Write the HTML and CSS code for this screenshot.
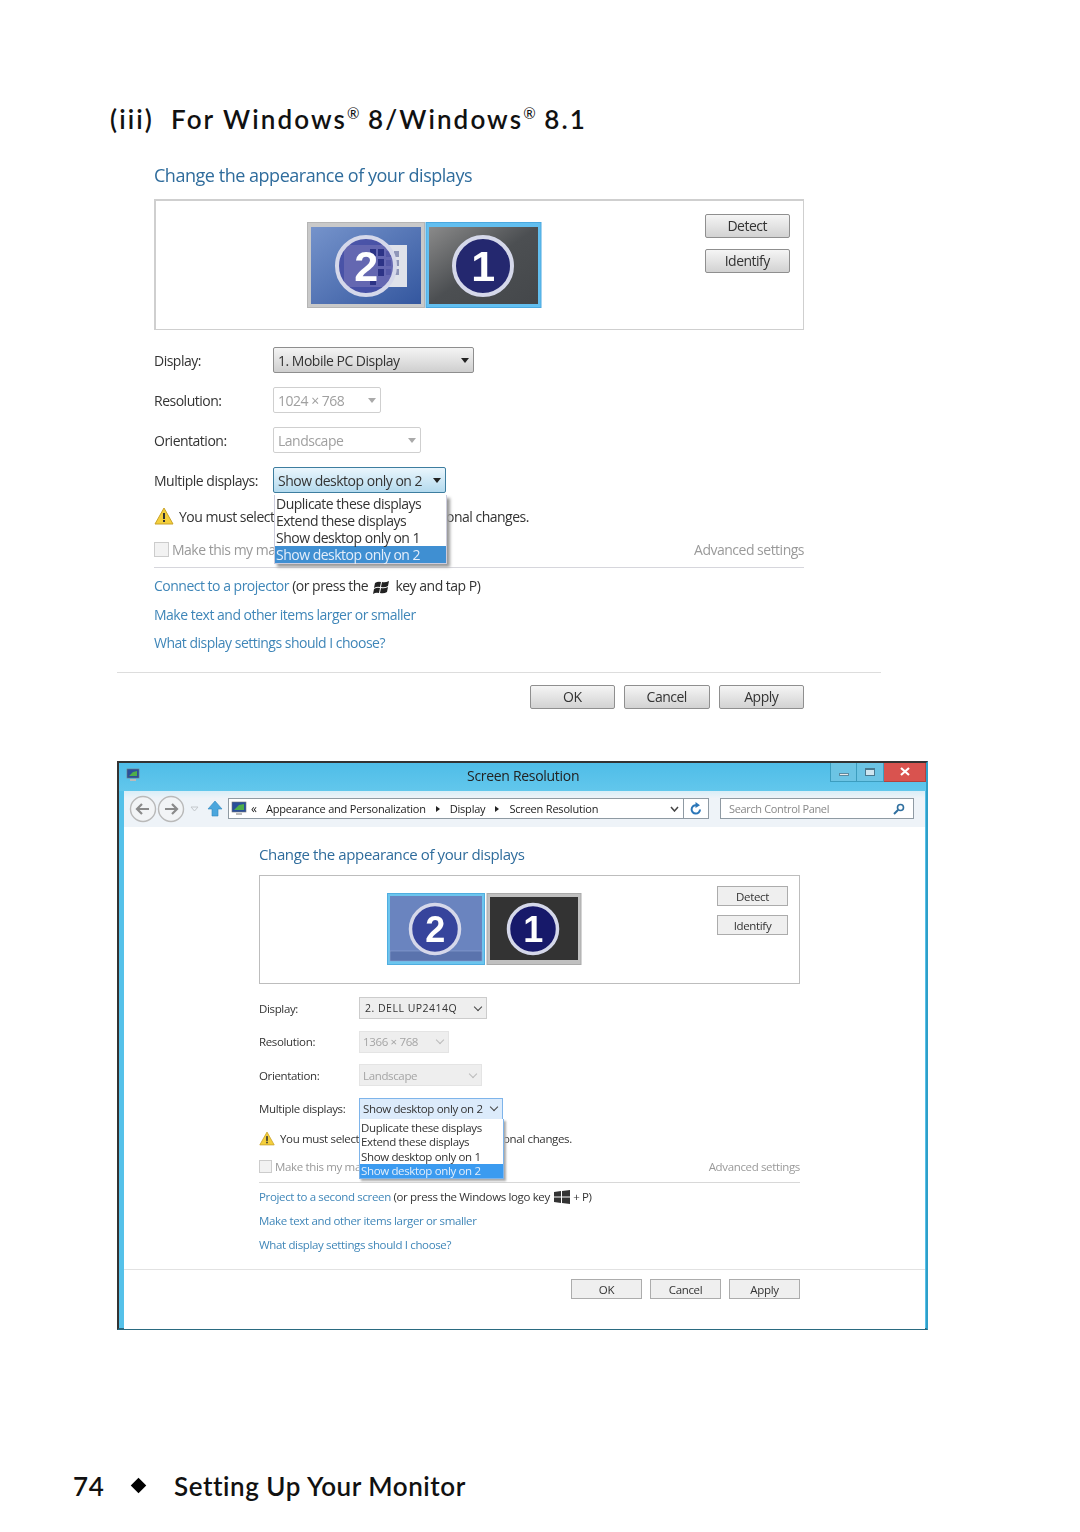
FILE: index.html
```html
<!DOCTYPE html>
<html>
<head>
    <title>Setting Up Your Monitor</title>
    <link rel="stylesheet" href="styles.css">
</head>
<body>
<div class="page">
    <h2 class="section-title"><span class="section-num">(iii)</span>For Windows<sup>®</sup> 8/Windows<sup>®</sup> 8.1</h2>

    <!-- Windows 8 dialog -->
    <div class="shot shot-one">
        <div class="inner">
            <h3 class="dlg-title">Change the appearance of your displays</h3>
            <div class="preview">
                <div class="monitors">
                    <svg width="235" height="87" viewBox="0 0 235 87">
                        <defs>
                            <linearGradient id="blue1" x1="0" y1="0" x2="1" y2="1"><stop offset="0" stop-color="#7593cb"/><stop offset="1" stop-color="#34579f"/></linearGradient>
                            <linearGradient id="gray1" x1="0" y1="0" x2="1" y2="1"><stop offset="0" stop-color="#8a8a8a"/><stop offset=".5" stop-color="#4c4f52"/><stop offset="1" stop-color="#44474a"/></linearGradient>
                        </defs>
                        <rect x="0.5" y="0.5" width="117" height="85" fill="#c9c9c9" stroke="#b5b5b5"/>
                        <rect x="4" y="5" width="110" height="77" fill="url(#blue1)"/>
                        <rect x="37" y="23" width="63" height="42" fill="#dfe2ea"/>
                        <g fill="#8f96b8"><rect x="79" y="29" width="5" height="6"/><rect x="87" y="29" width="5" height="6"/><rect x="79" y="38" width="5" height="6"/><rect x="87" y="38" width="5" height="6"/><rect x="79" y="47" width="5" height="6"/><rect x="87" y="47" width="5" height="6"/></g>
                        <circle cx="59" cy="44" r="29" fill="#4549a3" fill-opacity=".8" stroke="#d5d8ea" stroke-width="4"/>
                        <g fill="#2c3386"><rect x="63" y="27" width="6" height="7"/><rect x="71" y="27" width="6" height="7"/><rect x="71" y="37" width="6" height="7"/><rect x="71" y="47" width="6" height="7"/><rect x="63" y="57" width="6" height="6"/></g>
                        <text x="59" y="59" class="mon-num" font-size="43">2</text>
                        <rect x="119" y="0.5" width="115" height="85" fill="#62bff0" stroke="#4aa8e0"/>
                        <rect x="122" y="5" width="109" height="77" fill="url(#gray1)"/>
                        <circle cx="176" cy="44" r="29" fill="#24286f" stroke="#d5d8ea" stroke-width="4"/>
                        <text x="176" y="59" class="mon-num" font-size="43">1</text>
                    </svg>
                </div>
                <div class="side-btns">
                    <div class="btn">Detect</div>
                    <div class="btn">Identify</div>
                </div>
            </div>
            <div class="row">
                <span class="label">Display:</span>
                <div class="select select-main"><span>1. Mobile PC Display</span><i class="caret"></i></div>
            </div>
            <div class="row">
                <span class="label">Resolution:</span>
                <div class="select select-off w-res"><span>1024 × 768</span><i class="caret"></i></div>
            </div>
            <div class="row">
                <span class="label">Orientation:</span>
                <div class="select select-off w-ori"><span>Landscape</span><i class="caret"></i></div>
            </div>
            <div class="row row-multi">
                <span class="label">Multiple displays:</span>
                <div class="select select-open"><span>Show desktop only on 2</span><i class="caret"></i></div>
                <ul class="drop">
                    <li>Duplicate these displays</li>
                    <li>Extend these displays</li>
                    <li>Show desktop only on 1</li>
                    <li class="sel">Show desktop only on 2</li>
                </ul>
            </div>
            <div class="warn">
                <svg class="warn-icon" width="20" height="18" viewBox="0 0 20 18"><path d="M10 1 L19 17 H1 Z" fill="#f4cf3c" stroke="#c9a227"/><rect x="9" y="6" width="2" height="6" fill="#333"/><rect x="9" y="13" width="2" height="2" fill="#333"/></svg>
                <span class="warn-left">You must select</span>
                <span class="warn-right">onal changes.</span>
            </div>
            <div class="check-row">
                <i class="checkbox"></i>
                <span class="check-text">Make this my ma</span>
                <a class="adv">Advanced settings</a>
            </div>
            <div class="links">
                <p><a>Connect to a projector</a> (or press the
                    <svg class="flag" width="17" height="15" viewBox="0 0 17 15"><path d="M2 3 Q5 1 8 2 L7 7 Q4 6 1 8 Z M9 2 Q12 3 16 1 L15 6 Q12 8 8 7 Z M1 9 Q4 7 7 8 L6 13 Q3 12 0 14 Z M8 8 Q11 9 15 7 L14 12 Q11 14 7 13 Z" fill="#222"/></svg>
                    key and tap P)</p>
                <p><a>Make text and other items larger or smaller</a></p>
                <p><a>What display settings should I choose?</a></p>
            </div>
        </div>
        <div class="foot">
            <div class="btn">OK</div>
            <div class="btn">Cancel</div>
            <div class="btn">Apply</div>
        </div>
    </div>

    <!-- Windows 8.1 window -->
    <div class="shot window">
        <div class="titlebar">
            <svg class="app-icon" width="14" height="14" viewBox="0 0 14 14"><rect x="1" y="1" width="12" height="9" fill="#2a4f9a" stroke="#777" stroke-width=".6"/><path d="M3 8 L7 4 L11 3 V8 Z" fill="#4fae4a"/><rect x="4" y="11" width="6" height="2" fill="#bbb"/></svg>
            <span class="win-title">Screen Resolution</span>
            <div class="win-ctrls">
                <div class="ctrl"><i class="ico-min"></i></div>
                <div class="ctrl"><i class="ico-max"></i></div>
                <div class="ctrl ctrl-close">
                    <svg width="10" height="9" viewBox="0 0 10 9"><path d="M1 1 L9 8 M9 1 L1 8" stroke="#fff" stroke-width="2.2"/></svg>
                </div>
            </div>
        </div>
        <div class="navbar">
            <svg class="nav-arrows" width="100" height="30" viewBox="0 0 100 30">
                <circle cx="15" cy="15" r="12.5" fill="#f2f4f6" stroke="#b9b9b9" stroke-width="1.4"/>
                <circle cx="43" cy="15" r="12.5" fill="#f2f4f6" stroke="#b9b9b9" stroke-width="1.4"/>
                <path d="M21 15 H9 M14 10 L9 15 L14 20" fill="none" stroke="#8a8a8a" stroke-width="2.2"/>
                <path d="M37 15 H49 M44 10 L49 15 L44 20" fill="none" stroke="#8a8a8a" stroke-width="2.2"/>
                <path d="M63 13 H70 L66.500 17 Z" fill="none" stroke="#c4c8cc"/>
                <path d="M87 7 L94 15 H90 V22 H84 V15 H80 Z" fill="#4ba6dd" stroke="#2f86bd" stroke-width=".6"/>
            </svg>
            <div class="address">
                <svg class="addr-icon" width="16" height="15" viewBox="0 0 16 15"><rect x="1" y="1" width="14" height="10" fill="#2a4f9a" stroke="#777" stroke-width=".6"/><path d="M3 9 L8 4 L13 3 V9 Z" fill="#4fae4a"/><rect x="5" y="12" width="6" height="2" fill="#bbb"/></svg>
                <span class="crumb-back">«</span>
                <span>Appearance and Personalization</span><i class="crumb-sep"></i>
                <span>Display</span><i class="crumb-sep"></i>
                <span>Screen Resolution</span>
                <svg class="addr-drop" width="9" height="6" viewBox="0 0 9 6"><path d="M1 1 L4.500 5 L8 1" fill="none" stroke="#444" stroke-width="1.500"/></svg>
            </div>
            <div class="refresh">
                <svg width="12" height="13" viewBox="0 0 12 13"><path d="M10 7.500 A4.200 4.200 0 1 1 6 3.200" fill="none" stroke="#2a76b8" stroke-width="2"/><path d="M5.500 0 L10 3.200 L5.500 6 Z" fill="#2a76b8"/></svg>
            </div>
            <div class="search">
                <span>Search Control Panel</span>
                <svg width="12" height="12" viewBox="0 0 12 12"><circle cx="7.500" cy="4.500" r="3" fill="none" stroke="#2f6f9f" stroke-width="1.600"/><path d="M5 7 L1 11" stroke="#2f6f9f" stroke-width="2"/></svg>
            </div>
        </div>
        <div class="win-body">
            <h3 class="dlg-title">Change the appearance of your displays</h3>
            <div class="preview">
                <div class="monitors">
                    <svg width="195" height="73" viewBox="0 0 195 73">
                        <rect x="0.5" y="0.5" width="97" height="71" fill="#6cc5ee" stroke="#50aee0"/>
                        <rect x="3" y="3" width="92" height="65" fill="#6a84bf"/>
                        <rect x="3" y="58" width="92" height="10" fill="#5a73ad" stroke="#8ea4d4" stroke-width=".6"/>
                        <circle cx="48" cy="36" r="24.500" fill="#36449c" stroke="#d5d8ea" stroke-width="3.500"/>
                        <text x="48" y="49" class="mon-num" font-size="36">2</text>
                        <rect x="100" y="0.5" width="94" height="71" fill="#c0c0c0" stroke="#aaa"/>
                        <rect x="103" y="4" width="88" height="63" fill="#333"/>
                        <circle cx="146" cy="36" r="24.500" fill="#17196a" stroke="#d5d8ea" stroke-width="3.500"/>
                        <text x="146" y="49" class="mon-num" font-size="36">1</text>
                    </svg>
                </div>
                <div class="side-btns">
                    <div class="btn">Detect</div>
                    <div class="btn">Identify</div>
                </div>
            </div>
            <div class="row">
                <span class="label">Display:</span>
                <div class="select select-main"><span>2. DELL UP2414Q</span><i class="chev"></i></div>
            </div>
            <div class="row">
                <span class="label">Resolution:</span>
                <div class="select select-off w-res"><span>1366 × 768</span><i class="chev"></i></div>
            </div>
            <div class="row">
                <span class="label">Orientation:</span>
                <div class="select select-off w-ori"><span>Landscape</span><i class="chev"></i></div>
            </div>
            <div class="row row-multi">
                <span class="label">Multiple displays:</span>
                <div class="select select-open"><span>Show desktop only on 2</span><i class="chev"></i></div>
                <ul class="drop">
                    <li>Duplicate these displays</li>
                    <li>Extend these displays</li>
                    <li>Show desktop only on 1</li>
                    <li class="sel">Show desktop only on 2</li>
                </ul>
            </div>
            <div class="warn">
                <svg class="warn-icon" width="16" height="15" viewBox="0 0 20 18"><path d="M10 1 L19 17 H1 Z" fill="#f4cf3c" stroke="#c9a227"/><rect x="9" y="6" width="2" height="6" fill="#333"/><rect x="9" y="13" width="2" height="2" fill="#333"/></svg>
                <span class="warn-left">You must select</span>
                <span class="warn-right">onal changes.</span>
            </div>
            <div class="check-row">
                <i class="checkbox"></i>
                <span class="check-text">Make this my ma</span>
                <a class="adv">Advanced settings</a>
            </div>
            <div class="links">
                <p><a>Project to a second screen</a> (or press the Windows logo key
                    <svg class="flag" width="16" height="14" viewBox="0 0 16 14"><path d="M0 2 L7 1 V6.500 H0 Z M8 1 L16 0 V6.500 H8 Z M0 7.500 H7 V13 L0 12 Z M8 7.500 H16 V14 L8 13 Z" fill="#333"/></svg>
                    + P)</p>
                <p><a>Make text and other items larger or smaller</a></p>
                <p><a>What display settings should I choose?</a></p>
            </div>
        </div>
        <div class="foot">
            <div class="btn">OK</div>
            <div class="btn">Cancel</div>
            <div class="btn">Apply</div>
        </div>
    </div>

    <div class="page-foot">
        <span class="page-num">74</span>
        <i class="diamond"></i>
        <span>Setting Up Your Monitor</span>
    </div>
</div>
</body>
</html>
```

FILE: styles.css
```css
/* Page frame */
body {
    margin: 0;
    background: #fff;
    font-family: "Open Sans", "Noto Sans", sans-serif;
    color: #333;
}

.page {
    width: 1080px;
    height: 1532px;
    padding-top: 101px;
    box-sizing: border-box;
    overflow: hidden;
}

.section-title {
    display: flex;
    margin: 0 0 0 110px;
    height: 36px;
    line-height: 36px;
    font-family: Lato, sans-serif;
    font-size: 26px;
    font-weight: 600;
    letter-spacing: 2.1px;
    color: #111;
    white-space: pre;
}

.section-title sup {
    font-size: 15px;
    font-weight: 400;
    line-height: 0;
    letter-spacing: 0;
    position: relative;
    top: 12px;
}

.section-num {
    width: 61px;
}

/* Shared dialog parts */
.shot {
    filter: blur(0.4px);
}

.dlg-title {
    margin: 0;
    font-weight: 400;
    color: #2f6c9c;
}

.preview {
    display: flex;
    box-sizing: border-box;
    background: #fff;
}

.monitors {
    display: flex;
}

.mon-num {
    font-family: "Liberation Sans", sans-serif;
    font-weight: 700;
    fill: #fff;
    text-anchor: middle;
}

.side-btns {
    display: flex;
    flex-direction: column;
    margin-left: auto;
}

.btn {
    box-sizing: border-box;
    text-align: center;
}

.row {
    display: flex;
    align-items: center;
    position: relative;
}

.label {
    flex: none;
}

.select {
    display: flex;
    align-items: center;
    justify-content: space-between;
    box-sizing: border-box;
}

.drop {
    position: absolute;
    margin: 0;
    padding: 0;
    list-style: none;
    background: #fff;
    box-sizing: border-box;
    z-index: 2;
    white-space: nowrap;
}

.drop .sel {
    color: #e4eefa;
}

.warn, .check-row {
    display: flex;
    align-items: center;
    white-space: nowrap;
}

.warn-left {
    flex: none;
}

.checkbox {
    flex: none;
    box-sizing: border-box;
    background: #f2f2f2;
    border: 1px solid #ccc;
}

.check-text {
    color: #999;
}

.adv {
    margin-left: auto;
    color: #9a9a9a;
}

.links p {
    margin: 0;
    white-space: nowrap;
}

.links a {
    color: #3f86b8;
}

.flag {
    vertical-align: middle;
}

.foot {
    display: flex;
    justify-content: flex-end;
    box-sizing: border-box;
}

/* First dialog, Windows 8 */
.shot-one {
    margin: 26px 0 0 117px;
    width: 764px;
    font-size: 14px;
    letter-spacing: -0.5px;
}

.shot-one .inner {
    padding-left: 37px;
    width: 650px;
}

.shot-one .dlg-title {
    font-size: 18px;
    line-height: 24px;
    height: 24px;
    letter-spacing: -0.47px;
}

.shot-one .preview {
    margin-top: 12px;
    height: 131px;
    border: 2px solid #cfcfcf;
    border-bottom-width: 1px;
    border-right-width: 1px;
}

.shot-one .preview + .row {
    margin-top: 10px;
}

.shot-one .monitors {
    margin: 21px 0 0 151px;
}

.shot-one .side-btns {
    margin-top: 13px;
    margin-right: 13px;
    gap: 11px;
}

.shot-one .btn {
    width: 85.500px;
    height: 24px;
    line-height: 22px;
    font-size: 14px;
    border: 1px solid #8f8f8f;
    border-radius: 2px;
    background: linear-gradient(#f5f5f5, #d2d2d2);
    color: #333;
}

.shot-one .row {
    height: 40px;
}

.shot-one .label {
    width: 119px;
}

.shot-one .select {
    height: 26px;
    padding: 0 4px 0 4px;
    border-radius: 2px;
}

.shot-one .select-main {
    width: 201px;
    border: 1px solid #8e8e8e;
    background: linear-gradient(#f4f4f4, #cfcfcf);
}

.shot-one .select-off {
    border: 1px solid #cfcfcf;
    color: #a0a0a0;
}

.shot-one .w-res { width: 108px; }
.shot-one .w-ori { width: 148px; }

.shot-one .select-open {
    width: 173px;
    border: 1px solid #3d7d9f;
    background: linear-gradient(#eaf6fd, #b4daee);
}

.caret {
    width: 0;
    height: 0;
    border-left: 4.500px solid transparent;
    border-right: 4.500px solid transparent;
    border-top: 5px solid #222;
}

.select-off .caret {
    border-top-color: #aaa;
}

.shot-one .drop {
    left: 120px;
    top: 35px;
    width: 173px;
    height: 69px;
    border: 1px solid #ccd;
    border-top: 0;
    box-shadow: 3px 3px 3px #999;
}

.shot-one .drop li {
    height: 17px;
    line-height: 17px;
    padding-left: 1px;
}

.shot-one .drop .sel {
    background: #3f8fd2;
}

.shot-one .warn {
    height: 32px;
}

.shot-one .warn-icon {
    margin-right: 5px;
}

.shot-one .warn-left {
    width: 95px;
}

.shot-one .warn-right {
    margin-left: 172px;
}

.shot-one .check-row {
    height: 36px;
    border-bottom: 1px solid #d6d6dc;
    box-sizing: border-box;
}

.shot-one .checkbox {
    width: 15px;
    height: 15px;
    margin-right: 3px;
}

.shot-one .links {
    padding-top: 4px;
}

.shot-one .links p {
    height: 28.500px;
    line-height: 28.500px;
}

.shot-one .flag {
    margin: 0 2px;
}

.shot-one .foot {
    margin-top: 14px;
    width: 764px;
    border-top: 1px solid #ddd;
    padding: 12px 77px 0 0;
    gap: 9px;
}

/* Second window, Windows 8.1 */
.window {
    margin-top: 52px;
    margin-left: 117px;
    width: 811px;
    height: 569px;
    box-sizing: border-box;
    border: 2px solid #333;
    border-color: #333 #2f9fc9 #2a6a80 #333;
    background: #55c1e9;
    font-size: 11.500px;
    letter-spacing: -0.35px;
}

.titlebar {
    display: flex;
    align-items: flex-start;
    height: 28px;
    position: relative;
    background: linear-gradient(#4fbde8, #62c7ec);
}

.app-icon {
    margin: 5px 0 0 7px;
}

.win-title {
    position: absolute;
    left: 348px;
    top: 3px;
    font-size: 14px;
    color: #222;
    letter-spacing: -0.3px;
}

.win-ctrls {
    display: flex;
    margin-left: auto;
    height: 19px;
}

.ctrl {
    display: flex;
    align-items: center;
    justify-content: center;
    width: 27px;
    background: #6cc4e4;
    border: 1px solid #3c9dbf;
    border-top: 0;
    box-sizing: border-box;
}

.ctrl + .ctrl {
    border-left: 0;
}

.ctrl-close {
    width: 42px;
    background: #d9534f;
    border-color: #b4423e;
}

.ico-min {
    width: 10px;
    height: 3px;
    margin-top: 6px;
    background: #e8e8e8;
    border: 1px solid #5b8aa0;
    box-sizing: border-box;
}

.ico-max {
    width: 10px;
    height: 8px;
    border: 1px solid #4a7a90;
    border-top-width: 2px;
    background: #cfe6f0;
    box-sizing: border-box;
}

.navbar {
    display: flex;
    align-items: center;
    height: 36px;
    margin: 0 1px 0 5px;
    background: linear-gradient(#d8eef8, #eef3f8 20%);
    box-sizing: border-box;
}

.nav-arrows {
    margin-left: 4px;
    flex: none;
}

.address {
    display: flex;
    align-items: center;
    width: 456px;
    height: 21px;
    padding-left: 2px;
    box-sizing: border-box;
    background: #fff;
    border: 1px solid #8f9aa3;
    color: #222;
    font-size: 11px;
    letter-spacing: -0.2px;
}

.addr-icon {
    margin-right: 4px;
}

.crumb-back {
    width: 15px;
    font-size: 12px;
}

.crumb-sep {
    width: 0;
    height: 0;
    margin: 0 10px;
    border-top: 3px solid transparent;
    border-bottom: 3px solid transparent;
    border-left: 4px solid #222;
}

.addr-drop {
    margin-left: auto;
    margin-right: 4px;
}

.refresh {
    display: flex;
    align-items: center;
    justify-content: center;
    width: 25px;
    height: 21px;
    box-sizing: border-box;
    background: #fff;
    border: 1px solid #8f9aa3;
    border-left: 0;
}

.search {
    display: flex;
    align-items: center;
    justify-content: space-between;
    width: 194px;
    height: 21px;
    margin-left: 11px;
    padding: 0 8px;
    box-sizing: border-box;
    background: #fff;
    border: 1px solid #8f9aa3;
    color: #888;
    font-size: 11px;
}

.win-body {
    margin: 0 1px 0 5px;
    height: 442px;
    padding-left: 135px;
    padding-right: 125px;
    padding-top: 17px;
    box-sizing: border-box;
    background: #fff;
}

.window .dlg-title {
    font-size: 15px;
    line-height: 20px;
    height: 20px;
    letter-spacing: -0.38px;
}

.window .preview {
    margin-top: 11px;
    height: 109px;
    border: 1px solid #bdbdbd;
}

.window .monitors {
    margin: 17px 0 0 127px;
}

.window .side-btns {
    margin-top: 10px;
    margin-right: 11px;
    gap: 9px;
}

.window .btn {
    height: 20px;
    width: 71px;
    line-height: 19px;
    font-size: 11.500px;
    border: 1px solid #acacac;
    background: #efefef;
}

.window .row {
    height: 33.500px;
}

.window .preview + .row {
    margin-top: 8px;
}

.window .label {
    width: 100px;
}

.window .select {
    height: 22px;
    padding: 0 5px 0 3px;
}

.window .select-main {
    width: 128px;
    background: #eee;
    border: 1px solid #ccc;
    padding-left: 5px;
    font-size: 10.500px;
    letter-spacing: 0.5px;
}

.window .select-off {
    background: #eee;
    border: 1px solid #e4e4e4;
    color: #a5a5a5;
}

.window .w-res { width: 90px; }
.window .w-ori { width: 123px; }

.window .select-open {
    width: 144px;
    background: #dcebfb;
    border: 1px solid #7eb4ea;
}

.chev {
    width: 5px;
    height: 5px;
    margin-top: -3px;
    border-right: 1.500px solid #444;
    border-bottom: 1.500px solid #444;
    transform: rotate(45deg);
}

.select-off .chev {
    border-color: #bbb;
}

.window .drop {
    left: 100px;
    top: 27px;
    width: 145px;
    height: 60px;
    padding-top: 2px;
    border: 1px solid #7eb4ea;
    border-top: 0;
    box-shadow: 2px 2px 2px #aaa;
}

.window .drop li {
    height: 14.300px;
    line-height: 14.300px;
    padding-left: 1px;
}

.window .drop .sel {
    background: #3b9bf0;
}

.window .warn {
    height: 24px;
    margin-top: 1px;
}

.window .warn-icon {
    margin-right: 5px;
}

.window .warn-left {
    width: 80px;
}

.window .warn-right {
    margin-left: 143px;
}

.window .check-row {
    height: 32px;
    box-sizing: border-box;
    border-bottom: 1px solid #d8d8d8;
}

.window .checkbox {
    width: 13px;
    height: 13px;
    margin-right: 3px;
}

.window .links {
    padding-top: 2px;
}

.window .links p {
    height: 24px;
    line-height: 24px;
}

.window .flag {
    margin: 0 1px;
}

.window .foot {
    margin: 0 1px 0 5px;
    height: 60px;
    background: #fff;
    border-top: 1px solid #e2e2e2;
    padding: 9px 125px 0 0;
    gap: 8px;
}

/* Running footer */
.page-foot {
    display: flex;
    align-items: center;
    margin: 138px 0 0 73px;
    height: 36px;
    font-family: Lato, sans-serif;
    font-size: 26px;
    font-weight: 600;
    letter-spacing: 0.55px;
    color: #111;
}

.page-num {
    width: 58px;
}

.diamond {
    width: 11px;
    height: 11px;
    margin-right: 30px;
    margin-left: 2px;
    background: #000;
    transform: rotate(45deg);
}
```
